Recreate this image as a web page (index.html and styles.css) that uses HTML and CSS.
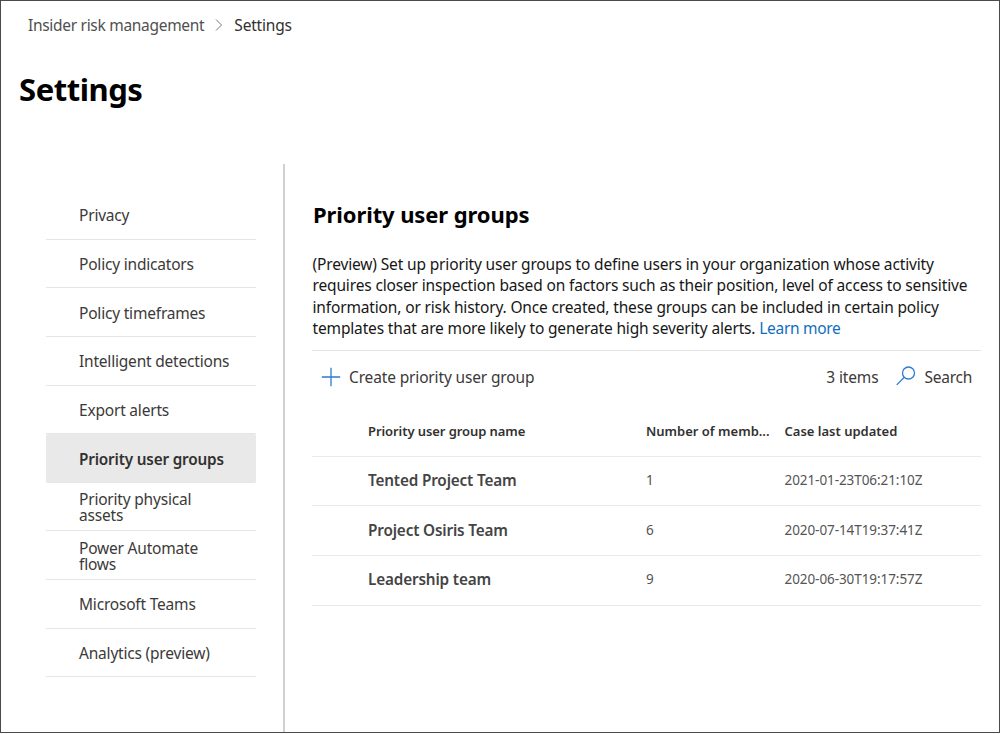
FILE: index.html
```html
<!DOCTYPE html>
<html lang="en">
<head>
<meta charset="utf-8">
<title>Settings</title>
<link rel="stylesheet" href="styles.css">
</head>
<body>
<div class="page">
  <nav class="breadcrumb">
    <a class="crumb">Insider risk management</a>
    <svg class="chevron" width="8" height="14" viewBox="0 0 8 14"><path d="M1 1.500 6.500 7 1 12.500"/></svg>
    <span class="crumb current">Settings</span>
  </nav>
  <h1 class="title">Settings</h1>
  <div class="layout">
    <aside class="sidebar">
      <ul class="menu">
        <li class="item">Privacy</li>
        <li class="item">Policy indicators</li>
        <li class="item">Policy timeframes</li>
        <li class="item">Intelligent detections</li>
        <li class="item">Export alerts</li>
        <li class="item selected">Priority user groups</li>
        <li class="item">Priority physical<br>assets</li>
        <li class="item">Power Automate<br>flows</li>
        <li class="item">Microsoft Teams</li>
        <li class="item">Analytics (preview)</li>
      </ul>
    </aside>
    <main class="content">
      <h2 class="heading">Priority user groups</h2>
      <p class="intro">(Preview) Set up priority user groups to define users in your organization whose activity<br>requires closer inspection based on factors such as their position, level of access to sensitive<br>information, or risk history. Once created, these groups can be included in certain policy<br>templates that are more likely to generate high severity alerts. <a class="link">Learn more</a></p>
      <div class="toolbar">
        <svg class="icon" width="20" height="20" viewBox="0 0 20 20"><path d="M10 .8V19.200M.8 10H19.200"/></svg>
        <span class="create">Create priority user group</span>
        <span class="count">3 items</span>
        <svg class="icon search-icon" width="20" height="20" viewBox="0 0 20 20"><circle cx="12.500" cy="7" r="6"/><path d="M8.300 11.300.7 18.900"/></svg>
        <span class="search">Search</span>
      </div>
      <div class="table">
        <div class="row head"><span class="name">Priority user group name</span><span class="members">Number of memb...</span><span class="updated">Case last updated</span></div>
        <div class="row"><span class="name">Tented Project Team</span><span class="members">1</span><span class="updated">2021-01-23T06:21:10Z</span></div>
        <div class="row"><span class="name">Project Osiris Team</span><span class="members">6</span><span class="updated">2020-07-14T19:37:41Z</span></div>
        <div class="row"><span class="name">Leadership team</span><span class="members">9</span><span class="updated">2020-06-30T19:17:57Z</span></div>
      </div>
    </main>
  </div>
</div>
</body>
</html>
```
FILE: styles.css
```css
* { box-sizing: border-box; }
body { margin: 0; background: #fff; font-family: "Noto Sans", "Open Sans", sans-serif; font-size: 15.500px; letter-spacing: -.1px; color: #3b3a39; }
.page { width: 1000px; height: 733px; border: 1px solid #4a4a4a; display: flex; flex-direction: column; white-space: nowrap; overflow: hidden; }
.breadcrumb { display: flex; align-items: center; height: 48px; padding-left: 27px; }
.chevron { width: 8px; height: 14px; margin: -1px 11px 0 11px; fill: none; stroke: #777; stroke-width: 1; }
.crumb { color: #505050; letter-spacing: -.3px; }
.current { color: #323130; letter-spacing: -.2px; }
.title { margin: 17px 0 0 18px; font-size: 31px; line-height: 46px; font-weight: 700; letter-spacing: -.45px; color: #000; }
.layout { display: flex; flex: 1; margin-top: 52px; }
.sidebar { width: 284px; padding: 27px 27px 0 45px; border-right: 2px solid #d0d0d0; }
.menu { list-style: none; margin: 0; padding: 0; }
.item { height: 48.650px; display: flex; align-items: center; padding: 1px 0 0 33px; border-bottom: 1px solid #e6e6e6; line-height: 16px; letter-spacing: -.2px; }
.selected { background: #e9e9e9; border-radius: 2px; font-weight: 600; font-size: 15.300px; letter-spacing: -.18px; color: #323130; }
.content { width: 669px; margin-left: 27px; padding-top: 34px; }
.heading { margin: 0 0 0 1px; font-size: 22px; line-height: 32px; font-weight: 700; letter-spacing: -.1px; color: #000; }
.intro { margin: 24px 0 0; padding-left: .5px; line-height: 21.400px; letter-spacing: -.15px; color: #171717; padding-bottom: 10px; border-bottom: 1px solid #e4e4e4; }
.link { color: #106ebe; letter-spacing: -.3px; }
.toolbar { display: flex; align-items: center; height: 52px; padding: 0 9px; letter-spacing: -.15px; }
.icon { fill: none; stroke: #2b7cd3; stroke-width: 1.300; }
.create { margin-left: 8px; }
.count { margin-left: auto; }
.search-icon { margin: -1px 8px 0 18px; }
.search { letter-spacing: -.25px; }
.row { display: grid; grid-template-columns: 278px 138.500px 1fr; align-items: center; height: 49.700px; padding: 0 0 2px 56px; border-bottom: 1px solid #eaeaea; font-size: 13.500px; letter-spacing: -.07px; color: #555; }
.head { height: 54px; padding: 3px 0 0 56px; font-size: 13px; letter-spacing: 0; font-weight: 600; color: #323130; }
.row .name { font-weight: 600; font-size: 15.300px; letter-spacing: -.16px; color: #444; }
.head .name { font-size: 13px; letter-spacing: -.08px; color: #323130; }
```
